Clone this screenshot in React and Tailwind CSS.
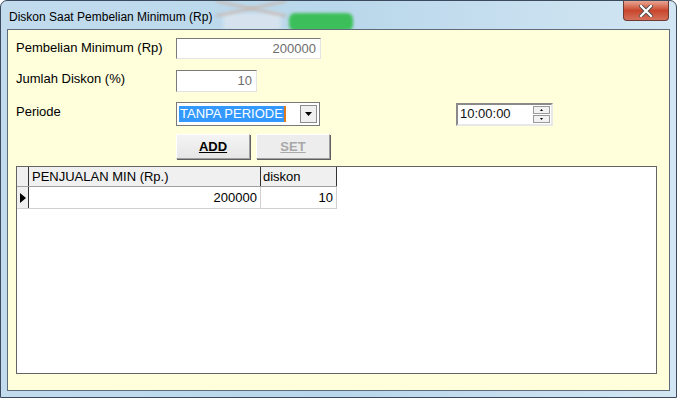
import React from 'react';

const font = { fontFamily: '"Liberation Sans", Arial, sans-serif' };

const Field = ({ value, width }) => (
    <div
        className={`h-full ${width} bg-white border border-[#7a7a7a] border-b-[#e3e3e3] border-r-[#e3e3e3] flex items-center justify-end pr-[4px] text-[13px] text-[#6d6d6d]`}
    >
        {value}
    </div>
);

const CloseButton = () => (
    <div className="w-[46px] h-[20px] rounded-b-[4px] border border-[#6e3a33] border-t-0 bg-gradient-to-b from-[#e8a493] via-[#c9462c] to-[#d4705a] flex items-center justify-center">
        <svg width="14" height="12" viewBox="0 0 14 12">
            <path d="M2 1 L12 11 M12 1 L2 11" stroke="#4a4a4a" strokeWidth="4" strokeLinecap="square" />
            <path d="M2 1 L12 11 M12 1 L2 11" stroke="#ffffff" strokeWidth="2.2" strokeLinecap="square" />
        </svg>
    </div>
);

const App = () => {
    return (
        <div className="w-[677px] h-[398px] bg-white" style={font}>
            <div className="relative w-full h-full rounded-t-[7px] border border-[#3b4a5c] bg-gradient-to-r from-[#c2dcee] via-[#b9d7eb] to-[#d3e6f3] flex flex-col overflow-hidden">
                {/* blurred stuff behind the aero glass */}
                <div className="absolute left-[222px] top-[12px] w-[58px] h-[18px] rounded bg-[#d6e3ee] blur-[2px]" />
                <div className="absolute left-[214px] top-[6px] w-[72px] h-[3px] bg-[#c7b3a8] opacity-70 rotate-[12deg] blur-[1.5px]" />
                <div className="absolute left-[214px] top-[6px] w-[72px] h-[3px] bg-[#c7b3a8] opacity-70 -rotate-[12deg] blur-[1.5px]" />
                <div className="absolute left-[288px] top-[12px] w-[64px] h-[18px] rounded-[6px] bg-[#3cbf5a] blur-[1.5px]" />

                <div className="relative h-[28px] flex items-start justify-between pl-[8px] pr-[7px]">
                    <span className="mt-[7px] text-[12px] text-black">Diskon Saat Pembelian Minimum (Rp)</span>
                    <CloseButton />
                </div>

                <div className="relative flex-1 mx-[6px] mb-[6px] border border-[#5f6b78] bg-[#ffffdc] flex flex-col pl-[8px] pr-[12px] pt-[8px] pb-[16px] text-[13px] text-black">
                    <div className="flex items-center h-[21px]">
                        <span className="w-[160px] -mt-[2px]">Pembelian Minimum (Rp)</span>
                        <Field value="200000" width="w-[145px]" />
                    </div>

                    <div className="flex items-center h-[22px] mt-[11px]">
                        <span className="w-[160px] -mt-[4px]">Jumlah Diskon (%)</span>
                        <Field value="10" width="w-[81px]" />
                    </div>

                    <div className="flex items-center h-[24px] mt-[10px]">
                        <span className="w-[160px] -mt-[4px]">Periode</span>
                        <div className="w-[144px] h-full bg-white border border-[#7a7a7a] flex items-center pl-[2px] pr-[2px]">
                            <span className="bg-[#3399ff] text-white px-[1px] leading-[16px] border-r-2 border-[#e07a1c]">TANPA PERIODE</span>
                            <div className="ml-auto w-[17px] h-[18px] bg-[#f0f0f0] border border-[#8c8c8c] flex items-center justify-center">
                                <svg width="7" height="4" viewBox="0 0 7 4">
                                    <path d="M0 0 H7 L3.5 4 Z" fill="#000" />
                                </svg>
                            </div>
                        </div>
                        <div className="ml-[136px] w-[97px] h-[23px] bg-white border-2 border-[#8a8a8a] border-b-[#e8e8e8] border-r-[#e8e8e8] flex items-center pl-[2px]">
                            <span className="text-[13px] text-[#111]">10:00:00</span>
                            <div className="ml-auto flex flex-col gap-[1px] pr-[1px]">
                                <div className="w-[17px] h-[8px] bg-[#f2f2f2] border border-[#9a9a9a] flex items-center justify-center">
                                    <svg width="3" height="2" viewBox="0 0 3 2"><path d="M0 2 H3 L1.5 0 Z" fill="#000" /></svg>
                                </div>
                                <div className="w-[17px] h-[8px] bg-[#f2f2f2] border border-[#9a9a9a] flex items-center justify-center">
                                    <svg width="3" height="2" viewBox="0 0 3 2"><path d="M0 0 H3 L1.5 2 Z" fill="#000" /></svg>
                                </div>
                            </div>
                        </div>
                    </div>

                    <div className="flex items-center h-[25px] mt-[8px] pl-[160px] gap-[6px]">
                        <div className="w-[74px] h-full bg-gradient-to-b from-[#f4f4f4] to-[#e6e6e6] border border-[#a0a0a0] border-t-white border-l-white shadow-[1px_1px_0_#606060] flex items-center justify-center">
                            <span className="font-bold underline text-black">ADD</span>
                        </div>
                        <div className="w-[74px] h-full bg-[#ededed] border border-[#a0a0a0] border-t-white border-l-white shadow-[1px_1px_0_#606060] flex items-center justify-center">
                            <span className="font-bold underline text-[#a8a8a8]">SET</span>
                        </div>
                    </div>

                    <div className="flex-1 mt-[7px] bg-white border border-[#646464] text-[13px]">
                        <div className="flex h-[20px] w-[320px] border-b border-[#a0a0a0]">
                            <div className="w-[12px] bg-[#f0f0f0] border-r border-[#333]" />
                            <div className="w-[232px] bg-[#f0f0f0] border-r border-[#333] pl-[3px] flex items-center">PENJUALAN MIN (Rp.)</div>
                            <div className="flex-1 bg-[#f0f0f0] border-r border-[#333] pl-[2px] flex items-center">diskon</div>
                        </div>
                        <div className="flex h-[22px] w-[320px] border-b border-[#d0d0d0]">
                            <div className="w-[12px] bg-[#f0f0f0] border-r border-[#333] flex items-center justify-center">
                                <svg width="6" height="10" viewBox="0 0 6 10"><path d="M0 0 L6 5 L0 10 Z" fill="#000" /></svg>
                            </div>
                            <div className="w-[232px] border-r border-[#d0d0d0] pr-[3px] flex items-center justify-end">200000</div>
                            <div className="flex-1 border-r border-[#d0d0d0] pr-[3px] flex items-center justify-end">10</div>
                        </div>
                    </div>
                </div>
            </div>
        </div>
    );
};

export default App;
